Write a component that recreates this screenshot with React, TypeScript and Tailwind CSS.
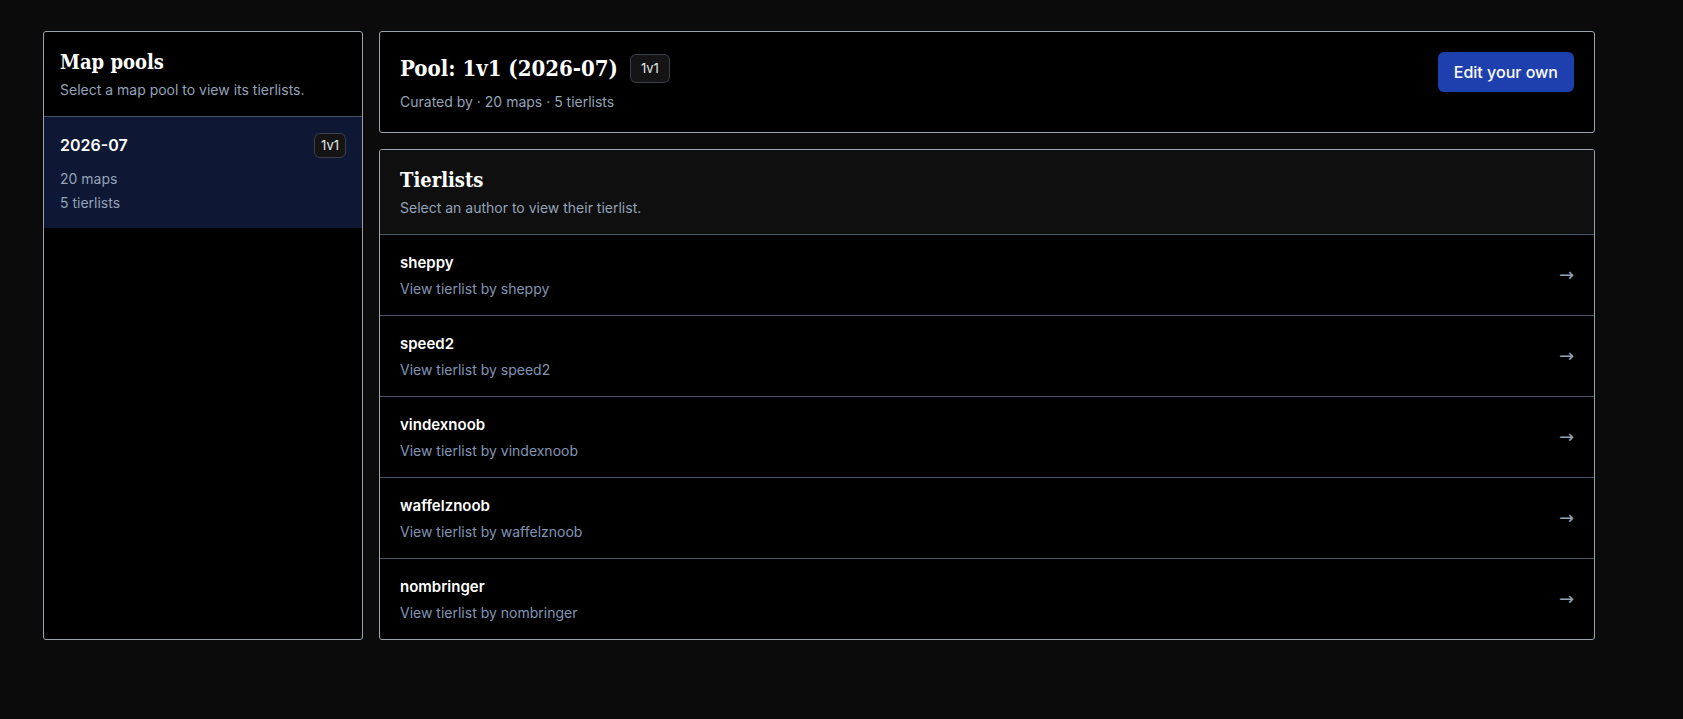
import React from "react";

const authors = ["sheppy", "speed2", "vindexnoob", "waffelznoob", "nombringer"];

const serif = "font-['DejaVu_Serif',serif] font-stretch-condensed";

const Badge: React.FC<{ large?: boolean }> = ({ large }) => (
  <span
    className={`inline-flex items-center rounded-md border border-[#3a3f48] bg-[#141414] text-[13px] leading-[19px] text-[#e5e7eb] ${
      large ? "px-2.5 py-1" : "px-1.5 py-0.5"
    }`}
  >
    1v1
  </span>
);

export default function App() {
  return (
    <div className="min-h-screen bg-[#0b0b0b] pl-[43px] pt-[31px] font-['Inter',sans-serif] text-white">
      <div className="grid w-[1552px] grid-cols-[320px_1fr] gap-4">
        {/* sidebar */}
        <aside className="overflow-hidden rounded-[3px] border border-[#9aa1ab] bg-black">
          <div className="border-b border-[#4b5568] p-4">
            <h2 className={`${serif} text-[20px] font-bold leading-7`}>Map pools</h2>
            <p className="mt-1 text-sm leading-5 text-[#94a3b8]">Select a map pool to view its tierlists.</p>
          </div>
          <div className="bg-[#0e1733] px-4 pt-4 pb-[13px]">
            <div className="flex items-start justify-between">
              <span className="text-base font-semibold leading-6">2026-07</span>
              <Badge />
            </div>
            <div className="mt-[9px] text-sm leading-6 text-[#94a3b8]">
              <p>20 maps</p>
              <p>5 tierlists</p>
            </div>
          </div>
        </aside>

        <div className="flex flex-col gap-4">
          {/* pool header */}
          <section className="flex items-start justify-between rounded-[3px] border border-[#9aa1ab] bg-black p-5">
            <div>
              <div className="flex items-center gap-3">
                <h1 className={`${serif} text-[22px] font-bold leading-8`}>Pool: 1v1 (2026-07)</h1>
                <Badge large />
              </div>
              <p className="mt-2 text-sm leading-5 text-[#94a3b8]">Curated by · 20 maps · 5 tierlists</p>
            </div>
            <button className="rounded-md bg-[#1e40af] px-4 py-2.5 text-base font-medium leading-5 text-white">
              Edit your own
            </button>
          </section>

          {/* tierlists */}
          <section className="overflow-hidden rounded-[3px] border border-[#9aa1ab] bg-black">
            <div className="border-b border-[#4b5568] bg-[#0f0f0f] px-5 py-4">
              <h2 className={`${serif} text-[20px] font-bold leading-7`}>Tierlists</h2>
              <p className="mt-1 text-sm leading-5 text-[#94a3b8]">Select an author to view their tierlist.</p>
            </div>
            <ul className="divide-y divide-[#4b5568]">
              {authors.map((a) => (
                <li key={a} className="flex items-center justify-between px-5 py-4">
                  <div>
                    <p className="text-[15px] font-semibold leading-6">{a}</p>
                    <p className="mt-1 text-sm leading-5 text-[#8195b5]">View tierlist by {a}</p>
                  </div>
                  <span className="font-['DejaVu_Sans',sans-serif] text-lg text-[#94a3b8]">→</span>
                </li>
              ))}
            </ul>
          </section>
        </div>
      </div>
    </div>
  );
}
